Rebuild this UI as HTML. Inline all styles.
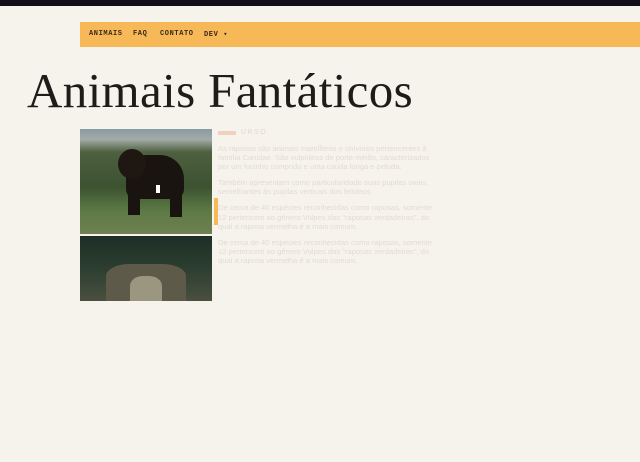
<!DOCTYPE html>
<html><head><meta charset="utf-8"><style>
body{margin:0;width:640px;height:462px;background:#f6f2ec;position:relative;overflow:hidden;font-family:"Liberation Sans",sans-serif}
.top{position:absolute;left:0;top:0;width:640px;height:6px;background:#130d1a}
.nav{position:absolute;left:80px;top:22px;width:560px;height:25px;background:#f7b957}
.nav span{position:absolute;top:8px;font:bold 7px "Liberation Mono",monospace;letter-spacing:.6px;color:#3a2a18}
h1{position:absolute;left:27px;top:62px;margin:0;font:49px "Liberation Serif",serif;letter-spacing:0.35px;color:#1e1b18;white-space:nowrap}
.img{position:absolute;left:80px;width:132px;overflow:hidden}
.bear{top:129px;height:105px;background:linear-gradient(#8a9aa2 0,#a3aba6 10%,#4e6040 22%,#3c5230 55%,#5d7a45 78%,#6e8050 100%)}
.wolf{top:236px;height:65px;background:linear-gradient(#1e2e26,#2c3e30 50%,#4a5040)}
.txt{position:absolute;left:218px;top:144px;width:214px;font-size:7.6px;line-height:9.1px;color:#e2ddd4}
.txt p{margin:0 0 7px}
</style></head><body>
<div class="top"></div>
<div class="nav"><span style="left:9px">ANIMAIS</span><span style="left:53px">FAQ</span><span style="left:80px">CONTATO</span><span style="left:124px">DEV ▾</span></div>
<h1>Animais Fantáticos</h1>
<div class="img bear">
<div style="position:absolute;left:46px;top:26px;width:58px;height:44px;background:#1a1410;border-radius:20px 24px 10px 10px"></div>
<div style="position:absolute;left:38px;top:20px;width:28px;height:30px;background:#1e1712;border-radius:50%"></div>
<div style="position:absolute;left:48px;top:60px;width:12px;height:26px;background:#1a1410"></div>
<div style="position:absolute;left:90px;top:60px;width:12px;height:28px;background:#1a1410"></div>
<div style="position:absolute;left:76px;top:56px;width:4px;height:8px;background:#fff"></div>
</div>
<div class="img wolf">
<div style="position:absolute;left:26px;top:28px;width:80px;height:40px;background:#5e5a4a;border-radius:30% 30% 0 0"></div>
<div style="position:absolute;left:50px;top:40px;width:32px;height:25px;background:#9a9680;border-radius:40% 40% 0 0"></div>
</div>
<div style="position:absolute;left:214px;top:198px;width:4px;height:27px;background:#f6b957"></div>
<div style="position:absolute;left:218px;top:131px;width:18px;height:4px;background:#f3cfc0"></div>
<div style="position:absolute;left:241px;top:129px;font-size:7px;letter-spacing:1.5px;color:#e3d8cf">URSO</div>
<div class="txt">
<p>As raposas são animais mamíferos e onívoros pertencentes à família Canidae. São vulpídeos de porte médio, caracterizados por um focinho comprido e uma cauda longa e peluda.</p>
<p>Também apresentam como particularidade suas pupilas ovais, semelhantes às pupilas verticais dos felídeos.</p>
<p>De cerca de 40 espécies reconhecidas como raposas, somente 12 pertencem ao gênero Vulpes das "raposas verdadeiras", do qual a raposa vermelha é a mais comum.</p>
<p>De cerca de 40 espécies reconhecidas como raposas, somente 12 pertencem ao gênero Vulpes das "raposas verdadeiras", do qual a raposa vermelha é a mais comum.</p>
</div>
</body></html>
